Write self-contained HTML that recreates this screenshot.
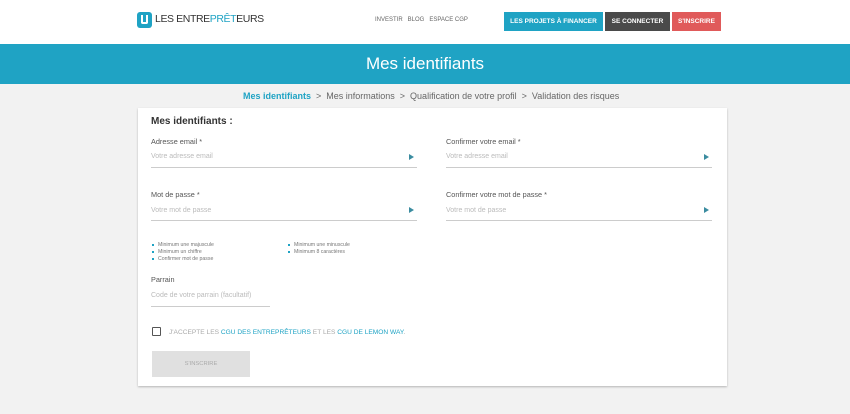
<!DOCTYPE html>
<html><head><meta charset="utf-8"><style>
*{margin:0;padding:0;box-sizing:border-box}
body{width:850px;height:414px;overflow:hidden;background:#f2f2f2;font-family:"Liberation Sans",sans-serif;position:relative}
.hdr{position:absolute;left:0;top:0;width:850px;height:44px;background:#fff}
.abs{position:absolute;white-space:nowrap}
.band{position:absolute;left:0;top:44px;width:850px;height:40px;background:#1fa3c4;color:#fff;font-size:17px;text-align:center;line-height:40px}
.btn{position:absolute;top:12px;height:19px;color:#fff;font-size:6.5px;font-weight:bold;text-align:center;line-height:19px}
.card{position:absolute;left:138px;top:108px;width:589px;height:278px;background:#fff;box-shadow:0 1px 2px rgba(0,0,0,.25)}
.lbl{position:absolute;font-size:7.3px;color:#555;white-space:nowrap}
.ph{position:absolute;font-size:7px;color:#bbb;white-space:nowrap}
.line{position:absolute;height:1px;background:#ccc}
.eye{position:absolute;width:0;height:0;border-left:5px solid #3b8ca0;border-top:3px solid transparent;border-bottom:3px solid transparent}
.li{position:absolute;font-size:5.2px;color:#777;white-space:nowrap}
.li:before{content:"";display:inline-block;width:2px;height:2px;background:#1fa3c4;margin-right:4px;vertical-align:middle}
</style></head><body>
<div class="hdr">
<div class="abs" style="left:137px;top:12px;width:15px;height:16px;background:#1fa3c4;border-radius:3px"></div>
<div class="abs" style="left:141px;top:15px;width:7px;height:9px;border:2px solid #fff;border-top:none;border-radius:0 0 2px 2px"></div>
<div class="abs" style="left:155px;top:13px;font-size:10.5px;color:#333;letter-spacing:-0.4px">LES ENTRE<span style="color:#1fa3c4">PRÊT</span>EURS</div>
<div class="abs" style="left:375px;top:17px;font-size:6px;color:#666">INVESTIR &nbsp; BLOG &nbsp; ESPACE CGP</div>
<div class="btn" style="left:504px;width:99px;background:#1fa3c4">LES PROJETS À FINANCER</div>
<div class="btn" style="left:605px;width:65px;background:#4a4a4a">SE CONNECTER</div>
<div class="btn" style="left:672px;width:49px;background:#e05a5a">S'INSCRIRE</div>
</div>
<div class="band">Mes identifiants</div>
<div class="abs" style="left:243px;top:91px;font-size:9px;color:#666"><b style="color:#1fa3c4;font-weight:bold">Mes identifiants</b> &nbsp;&gt;&nbsp; Mes informations &nbsp;&gt;&nbsp; Qualification de votre profil &nbsp;&gt;&nbsp; Validation des risques</div>
<div class="card">
<div class="lbl" style="left:13px;top:8px;font-size:10px;color:#333;font-weight:bold">Mes identifiants :</div>
<div class="lbl" style="left:13px;top:29px">Adresse email *</div>
<div class="ph" style="left:13px;top:45px">Votre adresse email</div>
<div class="eye" style="left:271px;top:46px"></div>
<div class="line" style="left:13px;top:59px;width:266px"></div>
<div class="lbl" style="left:308px;top:29px">Confirmer votre email *</div>
<div class="ph" style="left:308px;top:45px">Votre adresse email</div>
<div class="eye" style="left:566px;top:46px"></div>
<div class="line" style="left:308px;top:59px;width:266px"></div>
<div class="lbl" style="left:13px;top:82px">Mot de passe *</div>
<div class="ph" style="left:13px;top:99px">Votre mot de passe</div>
<div class="eye" style="left:271px;top:99px"></div>
<div class="line" style="left:13px;top:112px;width:266px"></div>
<div class="lbl" style="left:308px;top:82px">Confirmer votre mot de passe *</div>
<div class="ph" style="left:308px;top:99px">Votre mot de passe</div>
<div class="eye" style="left:566px;top:99px"></div>
<div class="line" style="left:308px;top:112px;width:266px"></div>
<div class="li" style="left:14px;top:134px">Minimum une majuscule</div>
<div class="li" style="left:14px;top:141px">Minimum un chiffre</div>
<div class="li" style="left:14px;top:148px">Confirmer mot de passe</div>
<div class="li" style="left:150px;top:134px">Minimum une minuscule</div>
<div class="li" style="left:150px;top:141px">Minimum 8 caractères</div>
<div class="lbl" style="left:13px;top:167px">Parrain</div>
<div class="ph" style="left:13px;top:184px">Code de votre parrain (facultatif)</div>
<div class="line" style="left:13px;top:198px;width:119px"></div>
<div class="abs" style="left:14px;top:219px;width:9px;height:9px;border:1px solid #555;border-radius:1px"></div>
<div class="abs" style="left:31px;top:221px;font-size:6.6px;color:#aaa">J'ACCEPTE LES <span style="color:#1fa3c4">CGU DES ENTREPRÊTEURS</span> ET LES <span style="color:#1fa3c4">CGU DE LEMON WAY</span>.</div>
<div class="abs" style="left:14px;top:243px;width:98px;height:26px;background:#e0e0e0;font-size:5.8px;color:#aaa;text-align:center;line-height:26px">S'INSCRIRE</div>
</div>
</body></html>
